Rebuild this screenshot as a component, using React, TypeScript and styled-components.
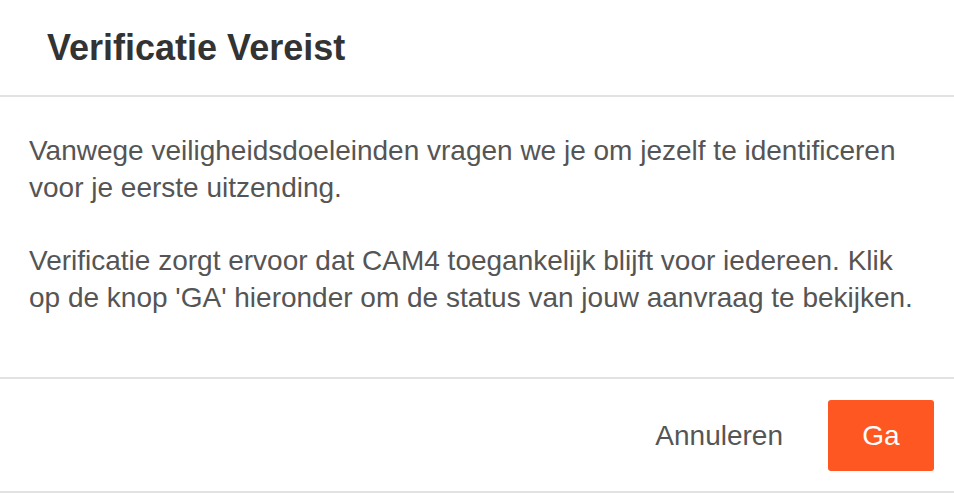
import React from 'react';
import styled, { createGlobalStyle } from 'styled-components';

const GlobalStyle = createGlobalStyle`
    body {
        margin: 0;
        background: #fff;
        font-family: "Liberation Sans", Arial, Helvetica, sans-serif;
    }
`;

const Modal = styled.div`
    width: 954px;
    background: #fff;
`;

const Header = styled.div`
    height: 95px;
    display: flex;
    align-items: center;
    padding-left: 47px;
    border-bottom: 2px solid #e2e2e2;
`;

const Title = styled.h2`
    margin: 0;
    font-size: 36px;
    font-weight: bold;
    color: #333;
`;

const Body = styled.div`
    padding: 35px 29px 61px;
`;

const Text = styled.p`
    margin: 0 0 36px;
    font-size: 28px;
    line-height: 37px;
    color: #555;

    &:last-child {
        margin-bottom: 0;
    }
`;

const Footer = styled.div`
    display: flex;
    justify-content: flex-end;
    align-items: center;
    gap: 25px;
    padding: 21px 20px 20px;
    border-top: 2px solid #e2e2e2;
    border-bottom: 2px solid #e2e2e2;
`;

const Button = styled.button<{ $primary?: boolean }>`
    height: 71px;
    padding: 0 ${(p) => (p.$primary ? '30px' : '20px')};
    min-width: ${(p) => (p.$primary ? '106px' : '0')};
    border: none;
    border-radius: 3px;
    font-family: inherit;
    font-size: 28px;
    color: ${(p) => (p.$primary ? '#fff' : '#555')};
    background: ${(p) => (p.$primary ? '#ff5722' : 'transparent')};
    cursor: pointer;
`;

const App = () => {
    return (
        <>
            <GlobalStyle />
            <Modal>
                <Header>
                    <Title>Verificatie Vereist</Title>
                </Header>
                <Body>
                    <Text>
                        Vanwege veiligheidsdoeleinden vragen we je om jezelf te identificeren voor je eerste
                        uitzending.
                    </Text>
                    <Text>
                        Verificatie zorgt ervoor dat CAM4 toegankelijk blijft voor iedereen. Klik op de knop
                        'GA' hieronder om de status van jouw aanvraag te bekijken.
                    </Text>
                </Body>
                <Footer>
                    <Button>Annuleren</Button>
                    <Button $primary>Ga</Button>
                </Footer>
            </Modal>
        </>
    );
};

export default App;
